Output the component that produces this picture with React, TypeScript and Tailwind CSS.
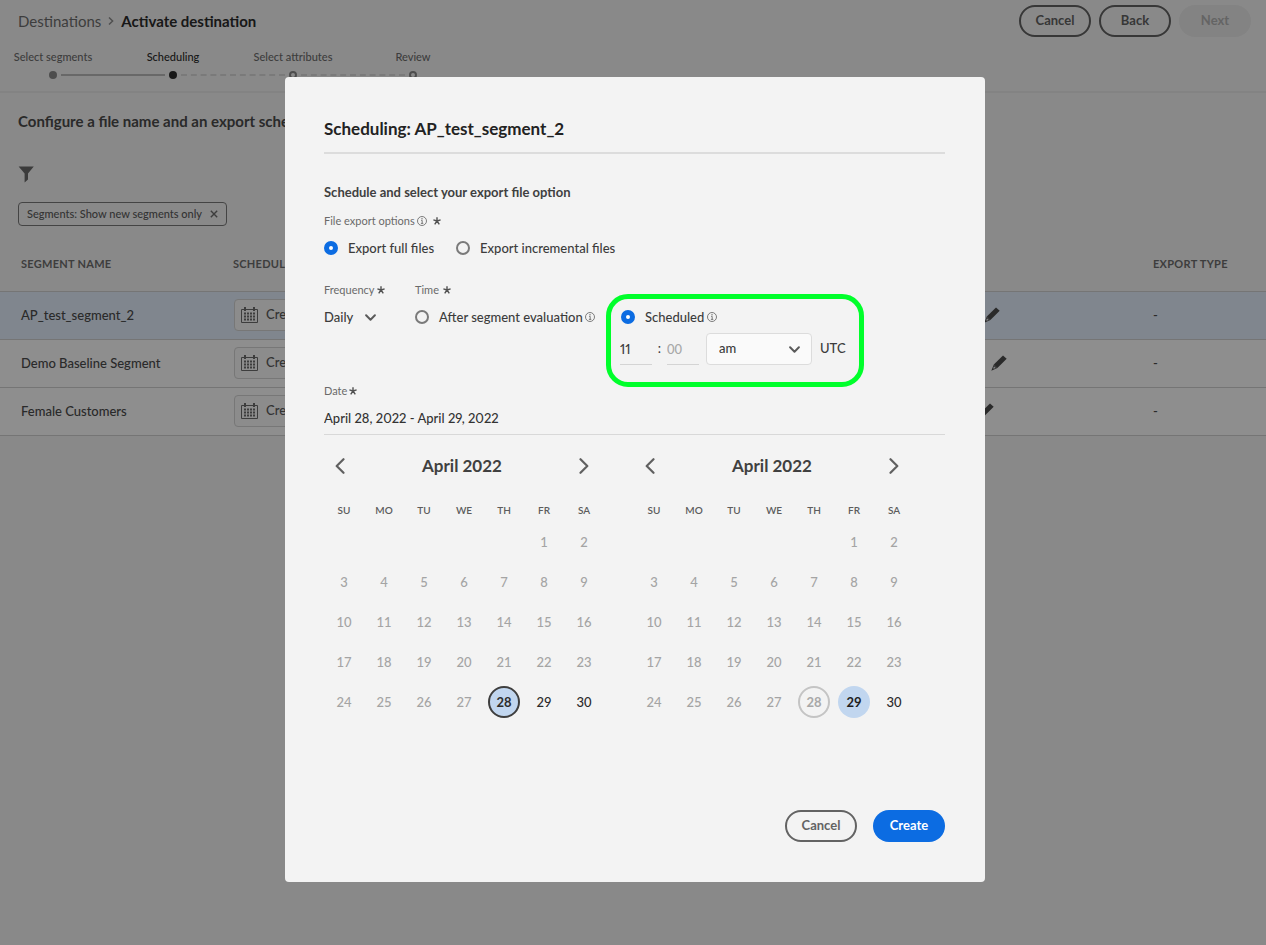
import type { ReactNode } from "react";

type Step = { label: string; state: "done" | "current" | "todo" };

const steps: Step[] = [
  { label: "Select segments", state: "done" },
  { label: "Scheduling", state: "current" },
  { label: "Select attributes", state: "todo" },
  { label: "Review", state: "todo" },
];

const segments = [
  { name: "AP_test_segment_2", selected: true, editPad: "pl-[31px]" },
  { name: "Demo Baseline Segment", selected: false, editPad: "pl-[38px]" },
  { name: "Female Customers", selected: false, editPad: "pl-[25px]" },
];

const dayNames = ["SU", "MO", "TU", "WE", "TH", "FR", "SA"];
const weeks: (number | null)[][] = [
  [null, null, null, null, null, 1, 2],
  [3, 4, 5, 6, 7, 8, 9],
  [10, 11, 12, 13, 14, 15, 16],
  [17, 18, 19, 20, 21, 22, 23],
  [24, 25, 26, 27, 28, 29, 30],
];

function Asterisk() {
  return (
    <svg className="size-2 shrink-0" viewBox="0 0 8 8" aria-hidden="true">
      <path
        d="M4 4V0.3M4 4L7.6 2.9M4 4L6.3 7.3M4 4L1.7 7.3M4 4L0.4 2.9"
        stroke="#505050"
        strokeWidth="1.4"
        fill="none"
      />
    </svg>
  );
}

function InfoIcon() {
  return (
    <svg className="size-[10px] shrink-0" viewBox="0 0 10 10" aria-hidden="true">
      <circle cx="5" cy="5" r="4.5" fill="none" stroke="#6e6e6e" strokeWidth="0.9" />
      <path d="M4.1 4.4H5.2V7.4M3.9 7.4H6.3" fill="none" stroke="#6e6e6e" strokeWidth="0.9" />
      <circle cx="5" cy="2.7" r="0.7" fill="#6e6e6e" />
    </svg>
  );
}

function Chevron({ className }: { className: string }) {
  return (
    <svg className={className} viewBox="0 0 10 6" aria-hidden="true">
      <path
        d="M1 1L5 5L9 1"
        fill="none"
        stroke="#5a5a5a"
        strokeWidth="1.8"
        strokeLinecap="round"
        strokeLinejoin="round"
      />
    </svg>
  );
}

function CalendarIcon() {
  return (
    <svg className="h-4 w-[17px] shrink-0" viewBox="0 0 17 16" aria-hidden="true">
      <path d="M0.5 2.5H16.5V15.5H0.5Z" fill="none" stroke="#6e6e6e" />
      <path d="M4 0V4M13 0V4" stroke="#6e6e6e" strokeWidth="2" />
      <path d="M3 6.5H14M3 9.5H14M3 12.5H14" stroke="#6e6e6e" strokeWidth="2" strokeDasharray="2 1" />
    </svg>
  );
}

function PencilIcon() {
  return (
    <svg className="size-4" viewBox="0 0 16 16" aria-hidden="true">
      <path d="M12 0.5L15.7 3.7L6.4 13L2.8 9.6Z" fill="#4b4b4b" />
      <path d="M2.8 9.6L6.4 13L0.3 15.7Z" fill="#4b4b4b" />
      <path d="M3 11.2L4.8 12.9L2.7 13.8L2.2 13.2Z" fill="#e8eaee" />
    </svg>
  );
}

function OutlineButton({ children }: { children: ReactNode }) {
  return (
    <button
      type="button"
      className="h-8 w-[72px] rounded-full border-2 border-[#636363] pb-[2px] text-[13px] leading-4 font-bold text-[#636363]"
    >
      {children}
    </button>
  );
}

function FieldLabel({ children }: { children: ReactNode }) {
  return <span className="flex h-4 items-center text-[11px] leading-4 text-[#6a6a6a]">{children}</span>;
}

function Radio({ name, checked, children }: { name: string; checked?: boolean; children: ReactNode }) {
  return (
    <label className="flex h-5 items-center text-[13px] leading-5 font-medium text-[#3c3c3c]">
      <input
        type="radio"
        name={name}
        defaultChecked={checked}
        className="mr-[10px] size-[14px] shrink-0 appearance-none rounded-full border-2 border-[#7a7a7a] checked:border-5 checked:border-[#0c6ce2] checked:bg-white"
      />
      {children}
    </label>
  );
}

function ProgressSteps() {
  return (
    <ol className="flex">
      {steps.map((step, i) => (
        <li key={step.label} className="relative flex w-[120px] flex-col items-center">
          <span
            className={
              step.state === "current"
                ? "text-[11px] leading-4 font-medium text-[#2c2c2c]"
                : "text-[11px] leading-4 font-medium text-[#6e6e6e]"
            }
          >
            {step.label}
          </span>
          <span
            className={
              step.state === "current"
                ? "mt-[6px] size-2 rounded-full bg-[#2c2c2c]"
                : step.state === "done"
                  ? "mt-[6px] size-2 rounded-full bg-[#8a8a8a]"
                  : "mt-[6px] size-2 rounded-full border-2 border-[#8a8a8a]"
            }
          />
          {i < steps.length - 1 && (
            <span
              className={
                step.state === "done"
                  ? "absolute bottom-[3px] left-[68px] w-[104px] border-t-2 border-[#b9b9b9]"
                  : "absolute bottom-[3px] left-[68px] w-[104px] border-t-2 border-dashed border-[#dadada]"
              }
            />
          )}
        </li>
      ))}
    </ol>
  );
}

function Page() {
  return (
    <div className="min-h-screen bg-[#f5f5f5]">
      <header className="border-b-2 border-[#eaeaea] pb-3">
        <div className="flex items-start justify-between pr-[15px] pl-[18px]">
          <nav aria-label="Breadcrumb" className="flex items-center pt-[9px] text-[15px] leading-6">
            <a href="#destinations" className="text-[#6e6e6e]">
              Destinations
            </a>
            <svg className="mx-[7px] h-2 w-[6px]" viewBox="0 0 6 8" aria-hidden="true">
              <path d="M1 0.5L4.6 4L1 7.5" fill="none" stroke="#8e8e8e" strokeWidth="1.5" />
            </svg>
            <span className="font-bold text-[#2c2c2c]">Activate destination</span>
          </nav>
          <div className="flex gap-2 pt-[5px]">
            <OutlineButton>Cancel</OutlineButton>
            <OutlineButton>Back</OutlineButton>
            <button
              type="button"
              disabled
              className="h-8 w-[72px] rounded-full bg-[#eaeaea] pb-[2px] text-[13px] leading-4 font-bold text-[#b3b3b3]"
            >
              Next
            </button>
          </div>
        </div>
        <div className="-ml-[7px] pt-3">
          <ProgressSteps />
        </div>
      </header>
      <main>
        <div className="px-[18px]">
          <h1 className="pt-4 text-[15px] leading-6 font-bold text-[#4b4b4b]">
            Configure a file name and an export schedule
          </h1>
          <button type="button" aria-label="Filter" className="mt-[33px] block">
            <svg className="h-[17px] w-4" viewBox="0 0 16 17" aria-hidden="true">
              <path d="M0.6 0.5H15.8L10 7.6V13.6L6.6 16.6V7.6Z" fill="#6a6a6a" />
            </svg>
          </button>
          <div className="mt-[19px] inline-flex h-6 items-center rounded border border-[#7a7a7a] px-2 text-[11px] font-medium text-[#5c5c5c]">
            Segments: Show new segments only
            <button type="button" aria-label="Remove filter" className="ml-2">
              <svg className="size-2" viewBox="0 0 8 8" aria-hidden="true">
                <path d="M0.8 0.8L7.2 7.2M7.2 0.8L0.8 7.2" stroke="#6e6e6e" strokeWidth="1.4" />
              </svg>
            </button>
          </div>
        </div>
        <table className="mt-3 w-full table-fixed border-collapse text-left">
          <colgroup>
            <col className="w-[233px]" />
            <col />
            <col className="w-[187px]" />
            <col className="w-[126px]" />
          </colgroup>
          <thead>
            <tr className="h-[53px] border-b border-[#d0d0d0] text-[11px] tracking-wide text-[#6e6e6e]">
              <th className="pl-[21px] font-bold">SEGMENT NAME</th>
              <th className="font-bold">SCHEDULE</th>
              <th aria-label="Edit" />
              <th className="pl-[13px] font-bold">EXPORT TYPE</th>
            </tr>
          </thead>
          <tbody>
            {segments.map((s) => (
              <tr
                key={s.name}
                className={
                  s.selected
                    ? "h-12 border-b border-[#d0d0d0] bg-[#e5effd]"
                    : "h-12 border-b border-[#d0d0d0] bg-[#fdfdfd]"
                }
              >
                <td className="pt-[2px] pl-[21px] text-[13px] font-medium text-[#4b4b4b]">{s.name}</td>
                <td>
                  <button
                    type="button"
                    className="ml-px flex h-8 items-center gap-2 rounded border border-[#d4d4d4] bg-[#fafafa] px-[6px] text-[13px] font-medium text-[#5c5c5c]"
                  >
                    <CalendarIcon />
                    Create schedule
                  </button>
                </td>
                <td className={s.editPad}>
                  <button type="button" aria-label={"Edit " + s.name} className="block">
                    <PencilIcon />
                  </button>
                </td>
                <td className="pt-[2px] pl-[13px] text-[13px] font-medium text-[#4b4b4b]">-</td>
              </tr>
            ))}
          </tbody>
        </table>
      </main>
    </div>
  );
}

function MonthArrow({ direction }: { direction: "previous" | "next" }) {
  return (
    <button type="button" aria-label={direction + " month"} className="flex h-6 w-8 items-center justify-center">
      <svg className="h-4 w-[10px]" viewBox="0 0 10 16" aria-hidden="true">
        <path
          d={direction === "previous" ? "M8.5 1.2L1.7 8L8.5 14.8" : "M1.5 1.2L8.3 8L1.5 14.8"}
          fill="none"
          stroke="#606060"
          strokeWidth="2.2"
          strokeLinecap="round"
          strokeLinejoin="round"
        />
      </svg>
    </button>
  );
}

function dayClass(day: number, kind: "start" | "end") {
  if (kind === "start" && day === 28)
    return "size-8 rounded-full border-2 border-[#3e3e3e] bg-[#c1d6ef] font-bold text-[#2c2c2c]";
  if (kind === "end" && day === 28)
    return "size-8 rounded-full border-2 border-[#c4c4c4] font-bold text-[#a8a8a8]";
  if (kind === "end" && day === 29) return "size-8 rounded-full bg-[#c1d6ef] font-bold text-[#1e1e1e]";
  if (day > 28) return "size-8 rounded-full font-medium text-[#2c2c2c]";
  return "size-8 rounded-full font-medium text-[#a4a4a4]";
}

function Month({ kind }: { kind: "start" | "end" }) {
  return (
    <section aria-label={kind + " date"} className="w-[280px]">
      <div className="flex items-center justify-between pr-1">
        <MonthArrow direction="previous" />
        <h3 className="text-[17px] leading-6 font-bold text-[#404040]">April 2022</h3>
        <MonthArrow direction="next" />
      </div>
      <table className="mt-5 w-full table-fixed border-collapse text-center">
        <thead>
          <tr className="h-6">
            {dayNames.map((d) => (
              <th key={d} className="p-0 text-[10px] font-semibold text-[#5c5c5c]">
                {d}
              </th>
            ))}
          </tr>
        </thead>
        <tbody>
          {weeks.map((week, w) => (
            <tr key={w} className="h-10">
              {week.map((day, i) => (
                <td key={i} className="p-0 text-[13px] leading-4">
                  {day !== null && (
                    <button type="button" disabled={kind === "start" ? day < 28 : day < 29} className={dayClass(day, kind)}>
                      {day}
                    </button>
                  )}
                </td>
              ))}
            </tr>
          ))}
        </tbody>
      </table>
    </section>
  );
}

function ScheduleDialog() {
  return (
    <div
      role="dialog"
      aria-modal="true"
      aria-labelledby="dialog-title"
      className="w-[700px] rounded bg-[#f3f3f3] pt-10 pr-10 pb-10 pl-[39px]"
    >
      <h2
        id="dialog-title"
        className="border-b-2 border-[#dcdcdc] pb-[11px] text-[17px] leading-6 font-bold text-[#222222]"
      >
        Scheduling: AP_test_segment_2
      </h2>
      <p className="mt-7 text-[13px] leading-5 font-bold text-[#404040]">
        Schedule and select your export file option
      </p>

      <fieldset className="mt-[11px]">
        <legend>
          <FieldLabel>
            File export options
            <span className="mr-[6px] ml-[2px]">
              <InfoIcon />
            </span>
            <Asterisk />
          </FieldLabel>
        </legend>
        <div className="mt-[9px] flex gap-[22px]">
          <Radio name="export" checked>
            Export full files
          </Radio>
          <Radio name="export">Export incremental files</Radio>
        </div>
      </fieldset>

      <div className="mt-6 flex">
        <div className="w-[91px]">
          <label htmlFor="frequency">
            <FieldLabel>
              <span className="mr-[2px]">Frequency</span>
              <Asterisk />
            </FieldLabel>
          </label>
          <div className="relative mt-[9px] w-[52px]">
            <select
              id="frequency"
              className="block h-5 w-full appearance-none bg-transparent text-[13px] leading-5 font-medium text-[#3c3c3c]"
            >
              <option>Daily</option>
            </select>
            <Chevron className="pointer-events-none absolute top-[7px] right-0 h-[7px] w-[11px]" />
          </div>
        </div>

        <fieldset>
          <legend>
            <FieldLabel>
              <span className="mr-1">Time</span>
              <Asterisk />
            </FieldLabel>
          </legend>
          <div className="mt-[9px] flex">
            <div className="w-[205px]">
              <Radio name="time">
                <span className="mr-[2px]">After segment evaluation</span>
                <InfoIcon />
              </Radio>
            </div>
            <div className="relative w-[226px]">
              <div className="ml-px">
                <Radio name="time" checked>
                  <span className="mr-[3px]">Scheduled</span>
                  <InfoIcon />
                </Radio>
              </div>
              <div className="mt-[6px] flex h-8 items-center text-[13px] font-medium text-[#3c3c3c]">
                <input
                  type="text"
                  aria-label="Hour"
                  defaultValue="11"
                  className="h-8 w-8 border-b border-[#d4d4d4] bg-transparent proportional-nums"
                />
                <span className="w-[15px] text-center">:</span>
                <input
                  type="text"
                  aria-label="Minute"
                  placeholder="00"
                  className="h-8 w-8 border-b border-[#d4d4d4] bg-transparent placeholder:text-[#a8a8a8]"
                />
                <div className="relative ml-[7px] w-[106px]">
                  <select
                    aria-label="AM or PM"
                    className="block h-8 w-full appearance-none rounded border border-[#dcdcdc] bg-[#fafafa] px-3"
                  >
                    <option>am</option>
                    <option>pm</option>
                  </select>
                  <Chevron className="pointer-events-none absolute top-[13px] right-3 h-[7px] w-[11px]" />
                </div>
                <span className="ml-2">UTC</span>
              </div>
              <div className="pointer-events-none absolute -top-[13px] -right-[18px] -bottom-[22px] -left-[14px] rounded-[22px] border-5 border-[#00ff2b]" />
            </div>
          </div>
        </fieldset>
      </div>

      <div className="mt-[18px]">
        <label htmlFor="dates">
          <FieldLabel>
            <span className="mr-[2px]">Date</span>
            <Asterisk />
          </FieldLabel>
        </label>
        <input
          id="dates"
          type="text"
          readOnly
          value="April 28, 2022 - April 29, 2022"
          className="mt-[9px] block w-full border-b border-[#d8d8d8] bg-transparent pb-[6px] text-[13px] leading-5 font-medium text-[#333333] proportional-nums"
        />
      </div>

      <div className="mt-[19px] flex gap-[30px]">
        <Month kind="start" />
        <Month kind="end" />
      </div>

      <div className="mt-[88px] flex justify-end gap-4">
        <OutlineButton>Cancel</OutlineButton>
        <button
          type="button"
          className="h-8 w-[72px] rounded-full bg-[#0c6ce2] pb-[2px] text-[13px] leading-4 font-bold text-white"
        >
          Create
        </button>
      </div>
    </div>
  );
}

export default function App() {
  return (
    <div className="font-['Lato',sans-serif]">
      <Page />
      <div className="fixed inset-0 flex items-start justify-center overflow-auto bg-black/44 pt-[77px] pl-1">
        <ScheduleDialog />
      </div>
    </div>
  );
}
